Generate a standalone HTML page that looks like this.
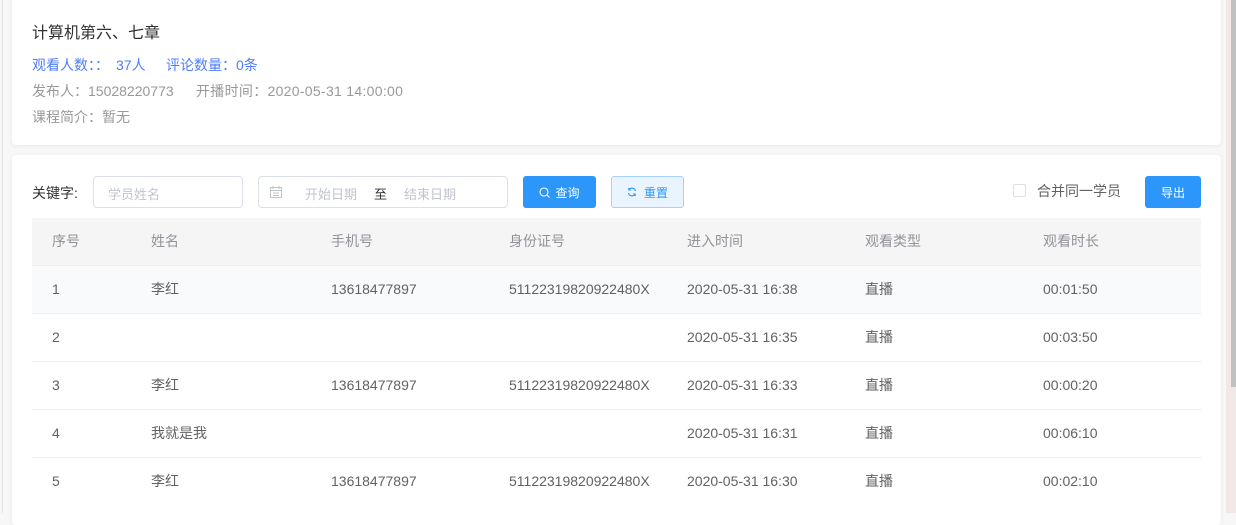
<!DOCTYPE html>
<html><head><meta charset="utf-8"><style>
*{margin:0;padding:0;box-sizing:border-box}
body{width:1236px;height:513px;overflow:hidden;background:#f7f7f8;font-family:"Liberation Sans","Noto Sans CJK SC",sans-serif;font-size:14px;color:#303133;position:relative}
.lb{position:absolute;left:2px;top:0;width:1px;height:513px;background:#e4e4e4}
.sb{position:absolute;left:1226px;top:0;width:10px;height:513px;background:#f1e8e8}
.sb i{position:absolute;left:5px;top:0;width:5px;height:387px;background:#c1c1c1}
.card{position:absolute;left:12px;width:1209px;background:#fff;border-radius:4px;box-shadow:0 1px 4px rgba(0,0,0,.06)}
.c1{top:-4px;height:149px}
.c2{top:155px;height:370px}
.t{position:absolute;left:20px;font-size:16px;color:#303133}
.s{position:absolute;font-size:14px;white-space:nowrap}
.in{position:absolute;height:32px;border:1px solid #dcdfe6;border-radius:4px;font-size:13px;color:#c0c4cc}
.btn{position:absolute;height:32px;border-radius:3px;font-size:12px;display:flex;align-items:center;justify-content:center}
table{position:absolute;left:20px;top:63px;width:1169px;border-collapse:collapse;font-size:14px}
th{height:47px;background:#f5f5f5;color:#909399;font-weight:normal;text-align:left}
td{height:48px;border-top:1px solid #ebeef5;color:#606266}
th:first-child,td:first-child{padding-left:20px}
tr.h td{background:#f9fafc}
</style></head><body>
<div class="lb"></div>
<div class="card c1">
<div class="t" style="top:23px">计算机第六、七章</div>
<span class="s" style="left:20px;top:59px;color:#4e7dfa">观看人数：：</span>
<span class="s" style="left:104px;top:59px;color:#4e7dfa">37人</span>
<span class="s" style="left:154px;top:59px;color:#4e7dfa">评论数量：0条</span>
<span class="s" style="left:20px;top:85px;color:#999">发布人：15028220773</span>
<span class="s" style="left:184px;top:85px;color:#999;letter-spacing:0.3px">开播时间：2020-05-31 14:00:00</span>
<span class="s" style="left:20px;top:111px;color:#999">课程简介：暂无</span>
</div>
<div class="card c2">
<div style="position:absolute;left:20px;top:28px;font-size:14px">关键字:</div>
<div class="in" style="left:81px;top:21px;width:150px;padding:7px 14px">学员姓名</div>
<div class="in" style="left:246px;top:21px;width:250px;padding:7px 10px">
<svg width="14" height="14" viewBox="0 0 14 14" style="position:absolute;left:10px;top:8px" fill="none" stroke="#c0c4cc"><rect x="1.5" y="2.5" width="11" height="10"/><path d="M1.5 5.5h11M4 1v3M10 1v3M4 8h6M4 10.5h6"/></svg>
<span style="position:absolute;left:46px;top:7px">开始日期</span><span style="position:absolute;left:115px;top:7px;color:#303133">至</span><span style="position:absolute;left:145px;top:7px">结束日期</span></div>
<div class="btn" style="left:511px;top:21px;width:73px;background:#2d96fb;color:#fff"><svg width="11" height="11" viewBox="0 0 11 11" fill="none" stroke="#fff" stroke-width="1.1" style="margin-right:5px"><circle cx="5" cy="5" r="4"/><path d="M8 8l2.5 2.5"/></svg>查询</div>
<div class="btn" style="left:599px;top:21px;width:73px;background:#eaf4fe;border:1px solid #a6d0fd;color:#2d96fb"><svg width="10" height="10" viewBox="0 0 10 10" fill="none" stroke="#2d96fb" stroke-width="1.1" style="margin-right:7px"><path d="M8.5 4A3.6 3.6 0 0 0 1.8 3M1.5 6a3.6 3.6 0 0 0 6.7 1M1.8 1v2h2M8.2 9V7h-2"/></svg>重置</div>
<div style="position:absolute;left:1001px;top:29px;width:13px;height:13px;border:1px solid #dcdfe6;border-radius:2px"></div>
<div style="position:absolute;left:1025px;top:26px;font-size:14px;color:#606266">合并同一学员</div>
<div class="btn" style="left:1133px;top:21px;width:56px;background:#2d96fb;color:#fff">导出</div>
<table>
<tr><th style="width:119px">序号</th><th style="width:180px">姓名</th><th style="width:178px">手机号</th><th style="width:178px">身份证号</th><th style="width:178px">进入时间</th><th style="width:178px">观看类型</th><th>观看时长</th></tr>
<tr class="h"><td>1</td><td>李红</td><td>13618477897</td><td>51122319820922480X</td><td>2020-05-31 16:38</td><td>直播</td><td>00:01:50</td></tr>
<tr><td>2</td><td></td><td></td><td></td><td>2020-05-31 16:35</td><td>直播</td><td>00:03:50</td></tr>
<tr><td>3</td><td>李红</td><td>13618477897</td><td>51122319820922480X</td><td>2020-05-31 16:33</td><td>直播</td><td>00:00:20</td></tr>
<tr><td>4</td><td>我就是我</td><td></td><td></td><td>2020-05-31 16:31</td><td>直播</td><td>00:06:10</td></tr>
<tr><td>5</td><td>李红</td><td>13618477897</td><td>51122319820922480X</td><td>2020-05-31 16:30</td><td>直播</td><td>00:02:10</td></tr>
</table>
</div>
<div class="sb"><i></i></div>
</body></html>
